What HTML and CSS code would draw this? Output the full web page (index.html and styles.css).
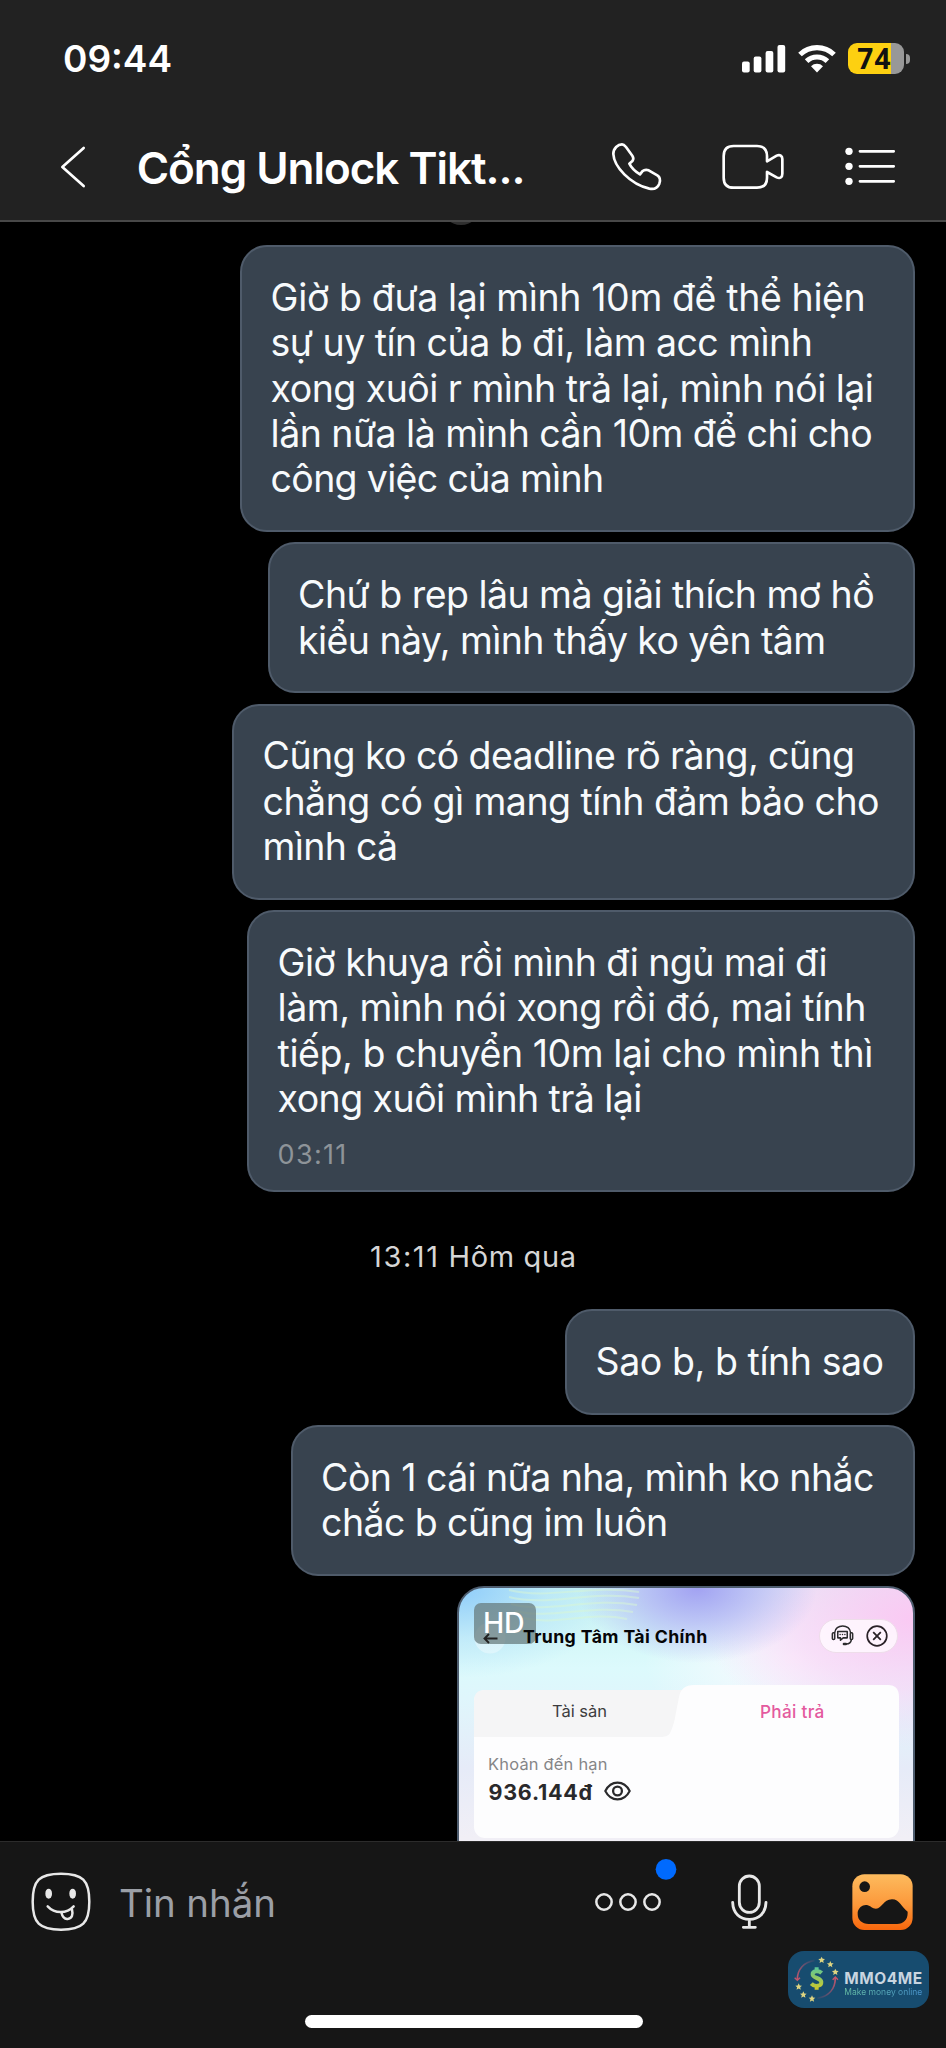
FILE: index.html
```html
<!DOCTYPE html>
<html lang="vi">
<head>
<meta charset="utf-8">
<title>Cổng Unlock Tikt...</title>
<link rel="stylesheet" href="styles.css">
</head>
<body>
<div class="screen">
  <header class="header">
    <div class="status">
      <span class="clock">09:44</span>
      <svg class="signal" viewBox="0 0 44 28"><g fill="#fff"><rect x="0" y="16.500" width="7.700" height="11" rx="2"/><rect x="11.700" y="11.500" width="7.700" height="16" rx="2"/><rect x="23.600" y="6" width="7.700" height="21.500" rx="2"/><rect x="35.500" y="0" width="7.700" height="27.500" rx="2"/></g></svg>
      <svg class="wifi" viewBox="0 0 38 29"><path d="M19 28.500l-6-6.200a8.600 8.600 0 0 1 12 0z" fill="#fff"/><path d="M2 10.500a24.500 24.500 0 0 1 34 0M8.600 17.200a15 15 0 0 1 20.800 0" fill="none" stroke="#fff" stroke-width="5.200"/></svg>
      <div class="battery"><span>74</span></div>
      <div class="battery-nub"></div>
    </div>
    <div class="titlebar">
      <svg class="back" viewBox="180 435 80 132"><path d="M251 444L187 501L251 558" fill="none" stroke="#fff" stroke-width="8" stroke-linecap="round" stroke-linejoin="round"/></svg>
      <h1 class="title">Cổng Unlock Tikt...</h1>
      <svg class="phone" viewBox="90 420 165 162"><path d="M100 462C100 445 114 433 126 433C132 433 134 436 138 441L157 467C161 473 161 477 158 482L148 491C154 503 166 515 180 523L187 514C193 509 200 509 206 511L232 526C241 532 242 540 238 551C233 563 222 569 208 566C150 552 102 500 100 462Z" fill="none" stroke="#fff" stroke-width="8" stroke-linejoin="round"/></svg>
      <svg class="video" viewBox="420 420 200 162"><path d="M561 484L590 467C600 462 607 468 607 477V521C607 532 600 537 590 532L561 516V533C561 553 551 563 531 563H461C441 563 431 553 431 533V468C431 448 441 438 461 438H531C551 438 561 448 561 468Z" fill="none" stroke="#fff" stroke-width="8" stroke-linejoin="round"/></svg>
      <svg class="menu" viewBox="790 420 165 162"><g fill="#fff"><circle cx="808" cy="454" r="11"/><circle cx="808" cy="499" r="11"/><circle cx="808" cy="544" r="11"/></g><path d="M841 454H942M841 499H942M841 544H942" stroke="#fff" stroke-width="8.500" stroke-linecap="round"/></svg>
    </div>
  </header>

  <main class="chat">
    <div class="peek"></div>
    <div class="bubble b1">
      <p class="ls-37">Giờ b đưa lại mình 10m để thể hiện</p>
      <p>sự uy tín của b đi, làm acc mình</p>
      <p class="ls-51">xong xuôi r mình trả lại, mình nói lại</p>
      <p>lần nữa là mình cần 10m để chi cho</p>
      <p class="ls-68">công việc của mình</p>
    </div>
    <div class="bubble b2">
      <p>Chứ b rep lâu mà giải thích mơ hồ</p>
      <p class="ls-59">kiểu này, mình thấy ko yên tâm</p>
    </div>
    <div class="bubble b3">
      <p class="ls-59">Cũng ko có deadline rõ ràng, cũng</p>
      <p>chẳng có gì mang tính đảm bảo cho</p>
      <p class="ls-68">mình cả</p>
    </div>
    <div class="bubble b4">
      <p class="ls-59">Giờ khuya rồi mình đi ngủ mai đi</p>
      <p class="ls-47">làm, mình nói xong rồi đó, mai tính</p>
      <p class="ls-44">tiếp, b chuyển 10m lại cho mình thì</p>
      <p class="ls-55">xong xuôi mình trả lại</p>
      <time class="time">03:11</time>
    </div>
    <div class="date"><span class="date-time">13:11</span> Hôm qua</div>
    <div class="bubble b5">
      <p class="ls-44">Sao b, b tính sao</p>
    </div>
    <div class="bubble b6">
      <p class="ls-59">Còn 1 cái nữa nha, mình ko nhắc</p>
      <p class="ls-59">chắc b cũng im luôn</p>
    </div>
    <div class="photo">
      <svg class="waves" viewBox="0 0 240 60"><g fill="none" stroke="#d9f7d5" stroke-width="2" opacity=".5"><path d="M50 2C90 12 130-4 180 4"/><path d="M50 9C90 19 130 2 180 10"/><path d="M52 16C92 26 130 9 178 17"/><path d="M56 23C94 32 130 16 174 24"/><path d="M64 30C98 38 130 23 168 31"/></g></svg>
      <div class="photo-head">
        <svg class="arrow" viewBox="0 0 32 32"><circle cx="16" cy="16" r="15.500" fill="#fff" opacity=".35"/></svg>
        <strong class="photo-title">Trung Tâm Tài Chính</strong>
        <div class="pill">
          <svg class="support" viewBox="64 44 68 68"><g fill="none" stroke="#2c2c2e" stroke-width="4.500" stroke-linejoin="round" stroke-linecap="round"><path d="M75 70C76 43 121 43 122 70"/><rect x="68" y="70" width="7" height="20" rx="3"/><rect x="121" y="70" width="7" height="20" rx="3"/><path d="M84 66H112V85H100L92 92V85H84Z"/><path d="M124 91C123 99 117 103 109 103"/><path d="M102 103H108" stroke-width="7"/></g><g fill="#2c2c2e"><circle cx="91" cy="75" r="2.200"/><circle cx="98" cy="75" r="2.200"/><circle cx="105" cy="75" r="2.200"/></g></svg>
          <svg class="close" viewBox="0 0 22 22"><circle cx="11" cy="11" r="9.800" fill="none" stroke="#2a2228" stroke-width="1.700"/><path d="M7.200 7.200L14.800 14.800M14.800 7.200L7.200 14.800" stroke="#2a2228" stroke-width="1.800"/></svg>
        </div>
      </div>
      <div class="panel">
        <svg class="tab-shape" viewBox="0 0 425 153"><rect y="5" width="425" height="148" rx="11" fill="#fdfdfe"/><path d="M0 52V16Q0 5 11 5H212L197 46Q195 52 188 52Z" fill="#f5f5f6"/><path d="M188 52Q197 52 199 43L205 12Q207 0 220 0H414Q425 0 425 12V70H188Z" fill="#fdfdfe"/></svg>
        <div class="tabs"><span class="tab">Tài sản</span><span class="tab active">Phải trả</span></div>
        <div class="due">Khoản đến hạn</div>
        <div class="amount"><b>936.144đ</b>
          <svg class="eye" viewBox="0 0 27 20"><path d="M1.300 10C7-1.200 20-1.200 25.700 10C20 21.200 7 21.200 1.300 10Z" fill="none" stroke="#2a2a2c" stroke-width="2.100"/><circle cx="13.500" cy="10" r="4.400" fill="none" stroke="#2a2a2c" stroke-width="2.300"/></svg>
        </div>
      </div>
      <span class="hd">HD</span>
      <svg class="arrow-mark" viewBox="0 0 15 11"><path d="M14.500 5.500H1.500M6 1L1.500 5.500L6 10" fill="none" stroke="#222" stroke-width="1.900"/></svg>
    </div>
  </main>

  <footer class="footer">
    <div class="composer">
      <svg class="emoji" viewBox="63 36 180 178"><g fill="none" stroke="#e8e8e8" stroke-width="7.500" stroke-linecap="round"><path d="M153 41C218 41 238 61 238 125S218 209 153 209S68 189 68 125S88 41 153 41Z"/><path d="M113 139C124 151 137 156 152 156S180 151 191 139"/><path d="M154 157C157 170 164 178 173 177C186 176 190 164 186 149"/></g><g fill="#e8e8e8"><ellipse cx="116" cy="101" rx="10" ry="15"/><ellipse cx="188" cy="101" rx="10" ry="15"/></g></svg>
      <span class="placeholder">Tin nhắn</span>
      <svg class="more" viewBox="75 50 246 165"><g fill="none" stroke="#e8e8e8" stroke-width="7.500"><circle cx="102" cy="185" r="23"/><circle cx="174" cy="185" r="23"/><circle cx="246" cy="185" r="23"/></g><circle cx="288" cy="87" r="31" fill="#006afe"/></svg>
      <svg class="mic" viewBox="480 100 117 174"><g fill="none" stroke="#e8e8e8" stroke-width="8.500" stroke-linecap="round"><rect x="508" y="109" width="60" height="109" rx="30"/><path d="M488 188C489 221 510 239 538 239S587 221 588 188M538 239V262M520 263H556"/></g></svg>
      <svg class="gallery" viewBox="847 101 183 169"><defs><linearGradient id="sun" x2="0" y2="1"><stop stop-color="#fdbb5e"/><stop offset=".55" stop-color="#fc983a"/><stop offset="1" stop-color="#f8660c"/></linearGradient></defs><rect x="848" y="102" width="181" height="167" rx="36" fill="url(#sun)"/><circle cx="885" cy="139" r="16" fill="#161616"/><path d="M864 216C866 202 879 192 892 194C904 197 907 205 919 205C938 205 940 177 967 177C990 177 995 201 1014 214V219C1014 239 1001 251 982 251H897C877 251 864 239 864 222Z" fill="#161616"/></svg>
    </div>
    <div class="watermark">
      <svg class="logo" viewBox="42 46 136 144"><defs><linearGradient id="coin" gradientUnits="userSpaceOnUse" x1="110" y1="83" x2="110" y2="150"><stop stop-color="#59c69a"/><stop offset="1" stop-color="#d0c927"/></linearGradient><linearGradient id="red1" x1="1" y1="0" x2="0" y2="1"><stop stop-color="#b85570" stop-opacity=".1"/><stop offset="1" stop-color="#c5566c"/></linearGradient><linearGradient id="red2" x1="0" y1="1" x2="1" y2="0"><stop stop-color="#b85570" stop-opacity=".1"/><stop offset="1" stop-color="#c5566c"/></linearGradient><path id="star" d="M0-10L3-3.500L10-3L4.600 2L6.300 9L0 5.300L-6.300 9L-4.600 2L-10-3L-3-3.500Z"/></defs>
        <path d="M104 62C72 68 52 88 52 120" fill="none" stroke="url(#red1)" stroke-width="5"/><path d="M44 114L52 122L60 114" fill="none" stroke="#c5566c" stroke-width="4"/>
        <path d="M112 176C146 170 166 148 166 114" fill="none" stroke="url(#red2)" stroke-width="5"/><path d="M158 120L166 112L174 120" fill="none" stroke="#c5566c" stroke-width="4"/>
        <g fill="#dfd581"><use href="#star" x="125" y="61"/><use href="#star" x="151" y="74"/><use href="#star" x="166" y="97"/><use href="#star" x="56" y="141"/><use href="#star" x="70" y="165"/><use href="#star" x="96" y="177"/></g>
        <path d="M125 100C117 92 97 92 98 105C99 117 123 113 124 127C125 141 103 142 94 132M110 83V96M110 137V150" fill="none" stroke="url(#coin)" stroke-width="12"/></svg>
      <div class="brand"><b>MMO4ME</b><small>Make money online</small></div>
    </div>
    <div class="home"></div>
  </footer>
</div>
</body>
</html>
```
FILE: styles.css
```css
* { box-sizing: border-box; }
body, p, h1 { margin: 0; }
body {
  background: #000;
  color: #f7fafc;
  font-family: Inter, "Noto Sans", sans-serif;
}
svg { display: block; flex: none; }
.screen {
  display: flex;
  flex-direction: column;
  width: 946px;
  height: 2048px;
  overflow: hidden;
}

/* Header */
.header {
  height: 222px;
  flex: none;
  background: #222;
  border-bottom: 2px solid #484848;
  color: #fff;
}
.status {
  display: flex;
  align-items: flex-start;
  height: 140px;
  padding: 43px 36px 0 63px;
}
.clock {
  font-size: 37px;
  line-height: 45px;
  font-weight: 600;
  margin-top: -7px;
  width: 678.7px;
}
.signal { width: 44px; height: 28px; margin-top: 1.5px; }
.wifi { width: 38px; height: 29px; margin: .5px 0 0 12px; }
.battery {
  width: 56px;
  height: 30.5px;
  margin-left: 12px;
  border-radius: 9px;
  background: linear-gradient(90deg, #fdd011 43px, #989898 43px);
  color: #111;
  font: 700 28px/30px "Open Sans", sans-serif;
  padding-left: 9.5px;
  letter-spacing: 1.2px;
}
.battery-nub {
  width: 4px;
  height: 10px;
  margin: 10.500px 0 0 2px;
  border-radius: 0 5px 5px 0;
  background: #989898;
}
.titlebar { display: flex; height: 80px; padding-left: 60px; }
.back { width: 26.7px; height: 44px; margin-top: 5px; }
.title {
  width: 473.3px;
  padding-left: 50px;
  margin-top: 1px;
  font-size: 44px;
  line-height: 54px;
  font-weight: 600;
  letter-spacing: -1.03px;
  white-space: nowrap;
}
.phone { width: 55px; height: 54px; margin-left: 50px; }
.video { width: 66.7px; height: 54px; margin-left: 55px; }
.menu { width: 55px; height: 54px; margin-left: 56.600px; }

/* Conversation */
.chat {
  position: relative;
  display: flex;
  flex-direction: column;
  align-items: flex-end;
  gap: 10.4px;
  height: 1619px;
  flex: none;
  overflow: hidden;
  padding: 23px 31px 0 0;
}
.peek {
  position: absolute;
  left: 441px;
  top: -37px;
  width: 40px;
  height: 40px;
  border-radius: 50%;
  background: #303030;
}
.bubble {
  flex: none;
  padding: 27.7px 0 28.3px 28.6px;
  border: 2px solid #4f5b6a;
  border-radius: 27px;
  background: #38434f;
  font-size: 37.5px;
  line-height: 45.4px;
  letter-spacing: -.54px;
  white-space: nowrap;
}
.b1 { width: 675px; }
.b2 { width: 647.5px; }
.b3 { width: 683px; }
.b4 { width: 668px; padding-bottom: 19.5px; }
.b5 { width: 350px; }
.b6 { width: 624.5px; }
.ls-37 { letter-spacing: -.38px; }
.ls-44 { letter-spacing: -.44px; }
.ls-47 { letter-spacing: -.47px; }
.ls-51 { letter-spacing: -.53px; }
.ls-55 { letter-spacing: -.56px; }
.ls-59 { letter-spacing: -.59px; }
.ls-68 { letter-spacing: -.68px; }
.time {
  display: block;
  margin-top: 17px;
  font-size: 27px;
  line-height: 32px;
  letter-spacing: 1.3px;
  color: #8e9499;
}
.date {
  align-self: flex-start;
  flex: none;
  height: 96.5px;
  padding: 36.5px 0 0 370px;
  font-size: 29px;
  line-height: 35px;
  letter-spacing: .65px;
  color: #d6d6d6;
}
.date-time { letter-spacing: 1.6px; }

/* Picture message */
.photo {
  position: relative;
  flex: none;
  width: 458px;
  height: 420px;
  border: 2px solid #4d5c6e;
  border-radius: 27px;
  overflow: hidden;
  color: #050507;
  background:
    radial-gradient(ellipse 120px 75px at 238px 0, #a2a2f2 0, #b5b9f5cc 45%, #c5cdf800 100%),
    radial-gradient(ellipse 160px 90px at 0 0, #8fccfa 0, #b4e2fa99 55%, #c4effa00 100%),
    radial-gradient(ellipse 210px 130px at 454px 30px, #fac9f3 0, #f8d6f6bb 55%, #f6e2f800 100%),
    radial-gradient(ellipse 150px 90px at 335px 70px, #fafaff 0, #f7fafe99 50%, #f8faff00 100%),
    linear-gradient(180deg, #c7f3f1 0, #dcfafc 80px, #dff6fc 110px, #e6ebf8 180px, #f1eff6 250px);
}
.waves { position: absolute; left: 0; top: 0; width: 240px; height: 60px; }
.photo-head { display: flex; height: 96.5px; padding-left: 15px; }
.arrow { width: 32px; height: 32px; margin-top: 34px; }
.arrow-mark { position: absolute; left: 24px; top: 44.5px; width: 15px; height: 11px; }
.photo-title {
  position: relative;
  z-index: 1;
  margin: 37.3px 0 0 17px;
  font-size: 17.7px;
  line-height: 22px;
  letter-spacing: .39px;
  white-space: nowrap;
}
.pill {
  display: flex;
  align-items: center;
  gap: 12px;
  width: 79px;
  height: 34px;
  margin: 30.500px 15px 0 auto;
  padding-left: 11px;
  border: 1px solid #eeddea;
  border-radius: 17px;
  background: #fffaffd0;
}
.support { width: 23px; height: 23px; }
.close { width: 22px; height: 22px; }
.panel { position: relative; height: 154px; margin: 0 15px 0 14.500px; }
.tab-shape { position: absolute; left: 0; top: 0; width: 425px; height: 153px; }
.tabs {
  position: relative;
  display: flex;
  height: 67px;
  padding: 16px 0 0 78.5px;
  font-size: 16.5px;
  line-height: 21px;
}
.tab { flex: none; width: 208px; color: #3c3c3e; }
.active { width: auto; font-size: 17.2px; font-weight: 500; letter-spacing: .3px; color: #e45a9e; }
.due {
  position: relative;
  padding-left: 14.5px;
  font-size: 16.4px;
  line-height: 24px;
  letter-spacing: .23px;
  color: #858587;
}
.amount {
  position: relative;
  display: flex;
  align-items: center;
  gap: 11px;
  padding-left: 15px;
  font-size: 21.5px;
  line-height: 32px;
  letter-spacing: .75px;
  color: #29292b;
}
.eye { width: 27px; height: 20px; margin-top: -1px; }
.hd {
  position: absolute;
  left: 15px;
  top: 15px;
  width: 62px;
  height: 41px;
  padding-left: 9px;
  border-radius: 7px;
  background: #65787ab8;
  color: #fff;
  font-size: 28.5px;
  line-height: 40px;
  font-weight: 500;
  letter-spacing: -.2px;
}

/* Composer */
.footer {
  flex: 1;
  background: #161616;
  border-top: 1px solid #2b2b2b;
}
.composer { display: flex; height: 109px; padding-left: 31px; }
.emoji { width: 60px; height: 59.300px; margin-top: 30px; }
.placeholder {
  width: 476px;
  margin-top: 38.300px;
  padding-left: 28px;
  font-size: 38.5px;
  line-height: 46px;
  letter-spacing: -.1px;
  color: #9b9fa6;
}
.more { width: 82px; height: 55px; margin: 15px 0 0 28px; }
.mic { width: 39px; height: 58px; margin: 31.300px 0 0 53px; }
.gallery { width: 61px; height: 56.300px; margin: 31.700px 0 0 83.300px; }
.watermark {
  display: flex;
  width: 141px;
  height: 57px;
  margin-left: 788px;
  padding: 4px 0 0 6px;
  border-radius: 16px;
  background: #174c6f;
}
.logo { width: 45.300px; height: 48px; }
.brand {
  display: flex;
  flex-direction: column;
  padding: 14px 0 0 5px;
  color: #c9d5e0;
  white-space: nowrap;
}
.brand b { font-size: 15.5px; line-height: 19px; letter-spacing: .55px; }
.brand small {
  margin-top: -1px;
  font-size: 8.5px;
  line-height: 11px;
  background: linear-gradient(90deg, #68c0a4, #4a95d0);
  background-clip: text;
  color: transparent;
}
.home {
  width: 338px;
  height: 13px;
  margin: 7px 0 0 304.500px;
  border-radius: 7px;
  background: #fff;
}
```
